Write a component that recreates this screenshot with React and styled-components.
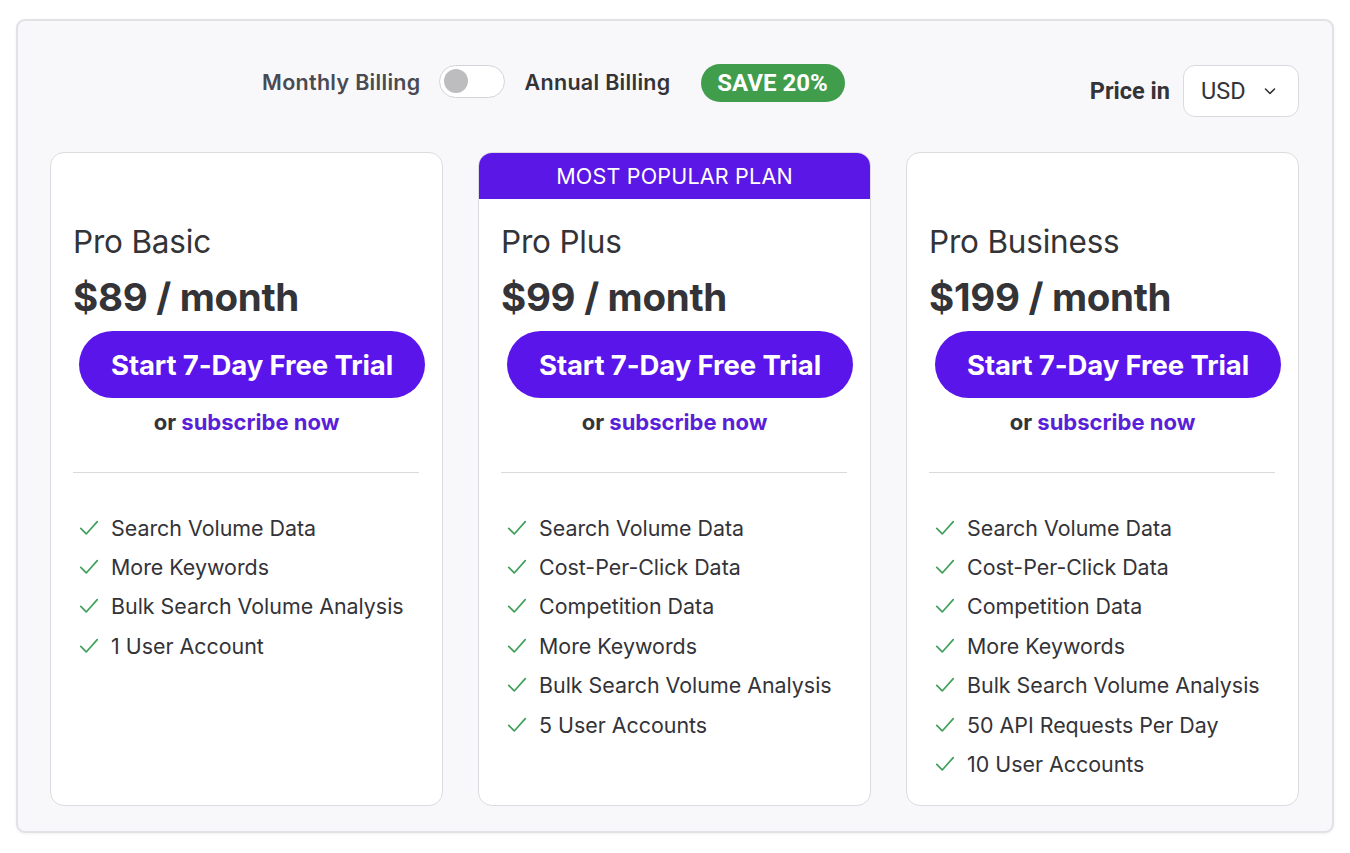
import React from "react";
import styled, { createGlobalStyle } from "styled-components";

const Global = createGlobalStyle`
  html, body { margin: 0; padding: 0; background: #ffffff; }
  body { font-family: Inter, "Noto Sans", "Liberation Sans", sans-serif; color: #333338; }
  * { box-sizing: border-box; }
`;

const Page = styled.div`
  padding: 19px 16px 20px 16px;
`;

const Panel = styled.div`
  width: 1318px;
  height: 814px;
  background: #f8f8fb;
  border: 2px solid #e1e1e6;
  border-radius: 9px;
  box-shadow: 0 1px 3px rgba(0, 0, 0, 0.06);
  padding: 0 33px 25px 32px;
  display: flex;
  flex-direction: column;
`;

const TopBar = styled.div`
  display: flex;
  align-items: flex-start;
  padding-top: 44px;
  height: 131px;
`;

const BillingGroup = styled.div`
  display: flex;
  align-items: center;
  margin-left: 212px;
  height: 38px;
  margin-top: -2px;
`;

const BillingLabel = styled.span`
  font-size: 21.5px;
  font-weight: 600;
  color: ${(p) => (p.$active ? "#333338" : "#4a4a52")};
  letter-spacing: 0.3px;
`;

const Toggle = styled.div`
  width: 66px;
  height: 33px;
  border: 1.5px solid #d4d4d8;
  border-radius: 17px;
  background: #ffffff;
  margin: -2px 20px 0 18px;
  display: flex;
  align-items: center;
  padding-left: 4px;
`;

const Knob = styled.div`
  width: 24px;
  height: 24px;
  border-radius: 50%;
  background: #bdbdc0;
`;

const Badge = styled.span`
  margin: 2px 0 0 30px;
  height: 38px;
  width: 144px;
  justify-content: center;
  border-radius: 19px;
  background: #3f9d4c;
  color: #ffffff;
  font-family: Roboto, Inter, sans-serif;
  font-weight: 700;
  font-size: 24px;
  display: flex;
  align-items: center;
  letter-spacing: 0px;
`;

const PriceGroup = styled.div`
  margin-left: auto;
  display: flex;
  align-items: center;
`;

const PriceLabel = styled.span`
  font-family: Roboto, Inter, sans-serif;
  font-size: 23.5px;
  font-weight: 700;
  color: #333338;
  margin-right: 13px;
`;

const Select = styled.div`
  width: 116px;
  height: 52px;
  border: 1.5px solid #dadade;
  border-radius: 12px;
  background: #ffffff;
  display: flex;
  align-items: center;
  padding-left: 17px;
  font-family: Roboto, Inter, sans-serif;
  font-size: 23.5px;
  color: #333338;
  gap: 17px;
`;

const Cards = styled.div`
  display: grid;
  grid-template-columns: repeat(3, 393px);
  column-gap: 35px;
  flex: 1;
`;

const Card = styled.div`
  background: #ffffff;
  border: 1.5px solid #dcdce0;
  border-radius: 14px;
  overflow: hidden;
  display: flex;
  flex-direction: column;
`;

const Band = styled.div`
  height: 46px;
  background: ${(p) => (p.$show ? "#5b17e6" : "transparent")};
  color: #ffffff;
  font-size: 21.5px;
  display: flex;
  align-items: center;
  justify-content: center;
  letter-spacing: 0.2px;
`;

const Body = styled.div`
  padding: 25px 22px 20px 22px;
  display: flex;
  flex-direction: column;
`;

const Title = styled.div`
  font-size: 31.5px;
  line-height: 36px;
  font-weight: 400;
  color: #333338;
  letter-spacing: -0.2px;
`;

const Price = styled.div`
  font-size: 38.5px;
  line-height: 44px;
  font-weight: 700;
  color: #333338;
  margin-top: 15px;
  letter-spacing: -0.3px;
`;

const TrialButton = styled.button`
  margin: 12px 0 0 6px;
  width: 346px;
  height: 67px;
  border: none;
  border-radius: 34px;
  background: #5a15ea;
  color: #ffffff;
  font-family: Inter, sans-serif;
  font-size: 27.5px;
  font-weight: 700;
  letter-spacing: -0.1px;
  cursor: pointer;
`;

const Subscribe = styled.div`
  margin-top: 10px;
  text-align: center;
  font-size: 22px;
  line-height: 28px;
  font-weight: 700;
  color: #333338;
`;

const Link = styled.a`
  color: #5a1fd9;
  text-decoration: none;
`;

const Divider = styled.hr`
  margin: 36px 0 0 0;
  border: none;
  border-top: 1.5px solid #dadade;
  width: 346px;
`;

const Features = styled.ul`
  list-style: none;
  margin: 35px 0 0 0;
  padding: 0;
`;

const Feature = styled.li`
  display: flex;
  align-items: center;
  height: 39.4px;
  font-size: 21.4px;
  color: #333338;
  padding-left: 5px;
`;

const CheckIcon = styled.svg`
  width: 22px;
  height: 22px;
  margin-right: 11px;
  flex-shrink: 0;
`;

const Check = () => (
  <CheckIcon viewBox="0 0 24 24" fill="none">
    <path d="M3 12.5 L9 18.5 L21 5" stroke="#3e9e58" strokeWidth="1.8" strokeLinecap="round" strokeLinejoin="round" />
  </CheckIcon>
);

const Chevron = () => (
  <svg width="14" height="14" viewBox="0 0 14 14" fill="none">
    <path d="M2.5 5 L7 9.5 L11.5 5" stroke="#333338" strokeWidth="1.6" strokeLinecap="round" strokeLinejoin="round" />
  </svg>
);

const plans = [
  {
    name: "Pro Basic",
    price: "$89 / month",
    popular: false,
    features: ["Search Volume Data", "More Keywords", "Bulk Search Volume Analysis", "1 User Account"],
  },
  {
    name: "Pro Plus",
    price: "$99 / month",
    popular: true,
    features: [
      "Search Volume Data",
      "Cost-Per-Click Data",
      "Competition Data",
      "More Keywords",
      "Bulk Search Volume Analysis",
      "5 User Accounts",
    ],
  },
  {
    name: "Pro Business",
    price: "$199 / month",
    popular: false,
    features: [
      "Search Volume Data",
      "Cost-Per-Click Data",
      "Competition Data",
      "More Keywords",
      "Bulk Search Volume Analysis",
      "50 API Requests Per Day",
      "10 User Accounts",
    ],
  },
];

export default function App() {
  return (
    <Page>
      <Global />
      <Panel>
        <TopBar>
          <BillingGroup>
            <BillingLabel>Monthly Billing</BillingLabel>
            <Toggle>
              <Knob />
            </Toggle>
            <BillingLabel $active>Annual Billing</BillingLabel>
            <Badge>SAVE 20%</Badge>
          </BillingGroup>
          <PriceGroup>
            <PriceLabel>Price in</PriceLabel>
            <Select>
              USD <Chevron />
            </Select>
          </PriceGroup>
        </TopBar>
        <Cards>
          {plans.map((p) => (
            <Card key={p.name}>
              <Band $show={p.popular}>{p.popular ? "MOST POPULAR PLAN" : ""}</Band>
              <Body>
                <Title>{p.name}</Title>
                <Price>{p.price}</Price>
                <TrialButton>Start 7-Day Free Trial</TrialButton>
                <Subscribe>
                  or <Link href="#">subscribe now</Link>
                </Subscribe>
                <Divider />
                <Features>
                  {p.features.map((f) => (
                    <Feature key={f}>
                      <Check />
                      {f}
                    </Feature>
                  ))}
                </Features>
              </Body>
            </Card>
          ))}
        </Cards>
      </Panel>
    </Page>
  );
}
